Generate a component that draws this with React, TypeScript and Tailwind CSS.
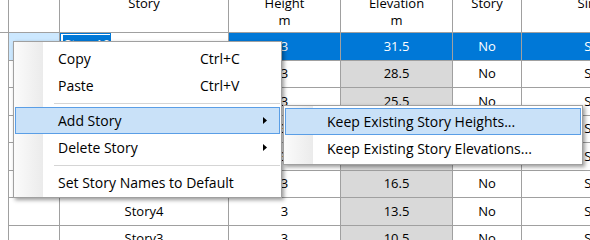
import React from 'react';

type Row = { name: string; h: string; e: string; m: string; s: string };

const rows: Row[] = [
  { name: 'Story10', h: '3', e: '31.5', m: 'No', s: 'Story10' },
  { name: 'Story9', h: '3', e: '28.5', m: 'No', s: 'Story10' },
  { name: 'Story8', h: '3', e: '25.5', m: 'No', s: 'Story10' },
  { name: 'Story7', h: '3', e: '22.5', m: 'No', s: 'Story10' },
  { name: 'Story6', h: '3', e: '19.5', m: 'No', s: 'Story10' },
  { name: 'Story5', h: '3', e: '16.5', m: 'No', s: 'Story10' },
  { name: 'Story4', h: '3', e: '13.5', m: 'No', s: 'Story10' },
  { name: 'Story3', h: '3', e: '10.5', m: 'No', s: 'Story10' },
];

function HeaderCell({ w, l1, l2 }: { w: string; l1: string; l2?: string }) {
  return (
    <div
      className={`${w} shrink-0 border-r border-[#a0a0a0] flex flex-col justify-end items-center overflow-hidden leading-[17px] pb-[3px] whitespace-nowrap`}
    >
      <div>{l1}</div>
      <div>{l2 ?? '\u00a0'}</div>
    </div>
  );
}

function Arrow() {
  return (
    <svg width="4" height="7" viewBox="0 0 4 7" className="ml-auto mr-[12px]">
      <path d="M0 0 L4 3.5 L0 7 Z" fill="#000" />
    </svg>
  );
}

function MenuItem({
  label,
  shortcut,
  arrow,
  active,
}: {
  label: string;
  shortcut?: string;
  arrow?: boolean;
  active?: boolean;
}) {
  return (
    <div
      className={`mx-[1px] h-[27px] flex items-center pl-[42px] border whitespace-nowrap ${
        active ? 'bg-[#c9e1f8] border-[#5a9ee6]' : 'border-transparent'
      }`}
    >
      <span className={shortcut ? 'w-[142px]' : ''}>{label}</span>
      {shortcut && <span>{shortcut}</span>}
      {arrow && <Arrow />}
    </div>
  );
}

function Sep() {
  return (
    <div className="h-[8px] flex items-center ml-[40px] mr-[1px]">
      <div className="h-px flex-1 bg-[#d5d5d5]" />
    </div>
  );
}

export default function App() {
  return (
    <div className="relative w-[590px] h-[240px] overflow-hidden bg-white text-black font-['Open_Sans',sans-serif]">
      <div className="flex flex-col text-[13px]">
        <div className="flex h-[33px] border-b border-[#a0a0a0]">
          <div className="w-[9px] shrink-0 border-r border-[#a0a0a0]" />
          <div className="w-[51px] shrink-0 border-r border-[#a0a0a0]" />
          <HeaderCell w="w-[169px]" l1="Story" />
          <HeaderCell w="w-[112px]" l1="Height" l2="m" />
          <HeaderCell w="w-[112px]" l1="Elevation" l2="m" />
          <HeaderCell w="w-[69px]" l1="Story" />
          <HeaderCell w="w-[172px]" l1="Similar To" />
        </div>
        {rows.map((r, i) => {
          const sel = i === 0;
          return (
            <div key={r.name} className="flex h-[27.57px] shrink-0">
              <div className="w-[9px] shrink-0 border-r border-[#a0a0a0]" />
              <div
                className={`w-[51px] shrink-0 border-r border-b border-[#a0a0a0] ${
                  sel ? 'bg-[#cce8ff]' : 'bg-white'
                }`}
              />
              {sel ? (
                <div className="w-[169px] shrink-0 border-r border-b border-[#a0a0a0] bg-white flex">
                  <div className="w-[51px] border border-[#0078d7] flex items-start pl-[2px] pt-[1px]">
                    <span className="bg-[#0078d7] text-white leading-[18px] px-[1px]">{r.name}</span>
                  </div>
                </div>
              ) : (
                <div className="w-[169px] shrink-0 border-r border-b border-[#a0a0a0] flex items-center justify-center">
                  {r.name}
                </div>
              )}
              <div
                className={`w-[112px] shrink-0 border-r border-b border-[#a0a0a0] flex items-center justify-center ${
                  sel ? 'bg-[#0078d7] text-white' : ''
                }`}
              >
                {r.h}
              </div>
              <div
                className={`w-[112px] shrink-0 border-r border-b border-[#a0a0a0] flex items-center justify-center ${
                  sel ? 'bg-[#0078d7] text-white' : 'bg-[#d9d9d9]'
                }`}
              >
                {r.e}
              </div>
              <div
                className={`w-[69px] shrink-0 border-r border-b border-[#a0a0a0] flex items-center justify-center ${
                  sel ? 'bg-[#0078d7] text-white' : ''
                }`}
              >
                {r.m}
              </div>
              <div
                className={`w-[172px] shrink-0 border-r border-b border-[#a0a0a0] flex items-center justify-center whitespace-nowrap ${
                  sel ? 'bg-[#0078d7] text-white' : ''
                }`}
              >
                {r.s}
              </div>
            </div>
          );
        })}
      </div>

      <div className="absolute left-[13px] top-[41px] w-[269px] h-[157px] border border-[#a0a0a0] shadow-[2px_2px_4px_rgba(0,0,0,0.4)] bg-[linear-gradient(90deg,#fbfbfb_0px,#ebebeb_29px,#ffffff_29px)] text-[14px] pt-[3px] flex flex-col">
        <MenuItem label="Copy" shortcut="Ctrl+C" />
        <MenuItem label="Paste" shortcut="Ctrl+V" />
        <Sep />
        <MenuItem label="Add Story" arrow active />
        <MenuItem label="Delete Story" arrow />
        <Sep />
        <MenuItem label="Set Story Names to Default" />
      </div>

      <div className="absolute left-[283px] top-[105px] w-[300px] h-[60px] border border-[#a0a0a0] shadow-[2px_2px_4px_rgba(0,0,0,0.4)] bg-[linear-gradient(90deg,#fbfbfb_0px,#ebebeb_29px,#ffffff_29px)] text-[14px] pt-[2px] flex flex-col">
        <div className="mx-[1px] h-[27px] flex items-center pl-[41px] border bg-[#c9e1f8] border-[#5a9ee6] whitespace-nowrap">
          Keep Existing Story Heights...
        </div>
        <div className="mx-[1px] h-[27px] flex items-center pl-[41px] border border-transparent whitespace-nowrap">
          Keep Existing Story Elevations...
        </div>
      </div>
    </div>
  );
}
